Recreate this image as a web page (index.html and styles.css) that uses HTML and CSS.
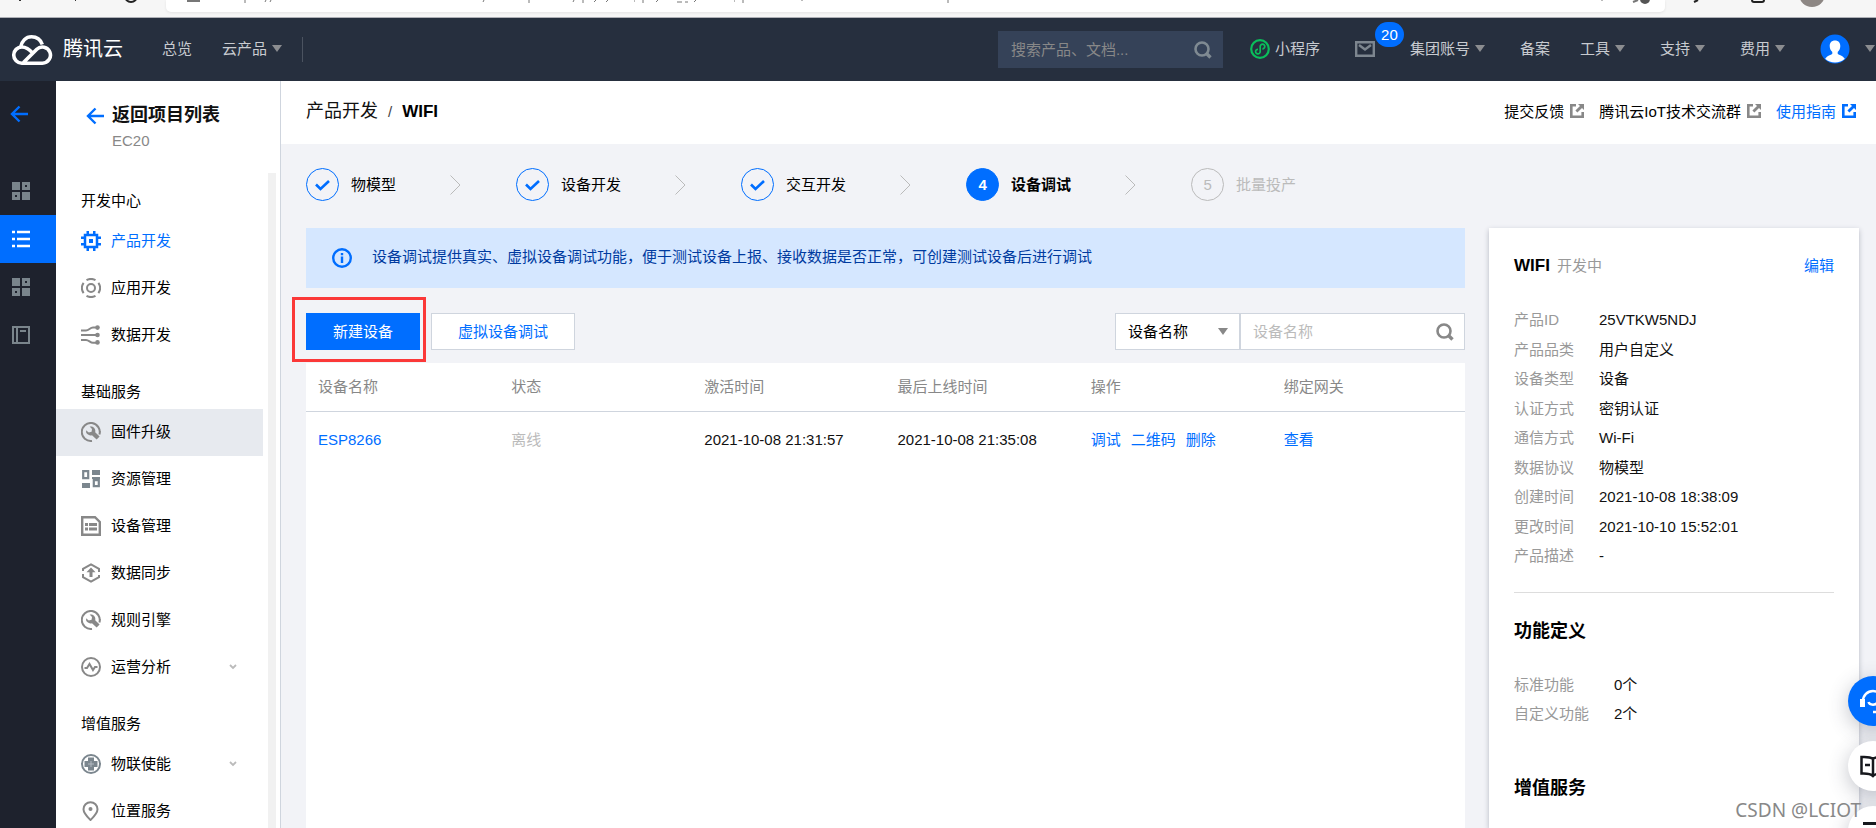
FILE: index.html
```
<!DOCTYPE html>
<html lang="zh-CN">
<head>
<meta charset="utf-8">
<title>设备调试 - 产品开发 - 腾讯云</title>
<link rel="stylesheet" href="styles.css">
</head>
<body>
<svg class="sprite" aria-hidden="true">
  <symbol id="caret" viewBox="0 0 10 7"><path d="M0 0h10L5 7z" fill="currentColor"/></symbol>
  <symbol id="arrow-left" viewBox="0 0 18 18"><path d="M18 9H2M9.500 1.500 2 9l7.500 7.500" fill="none" stroke="currentColor" stroke-width="2.400"/></symbol>
  <symbol id="search" viewBox="0 0 18 18"><circle cx="8" cy="8" r="6.500" fill="none" stroke="currentColor" stroke-width="2.600"/><path d="m12 12 4.500 4.500" stroke="currentColor" stroke-width="3.400"/></symbol>
  <symbol id="blocks" viewBox="0 0 18 18"><path d="M0 0h8v8H0zM10 10h8v8h-8z" fill="currentColor"/><path d="M11.500 1.500h5v5h-5zM1.500 11.500h5v5h-5z" fill="none" stroke="currentColor" stroke-width="3"/></symbol>
  <symbol id="external" viewBox="0 0 14 14"><path d="M6 1.300H1.300v11.400h11.400V8" fill="none" stroke="currentColor" stroke-width="2.600"/><path d="M8 0h6v6l-2-2-4.600 4.600-2-2L10 2z" fill="currentColor"/></symbol>
  <symbol id="check" viewBox="0 0 33 33"><path d="m10 16.500 4.500 4.500 8.500-8" fill="none" stroke="currentColor" stroke-width="2.600"/></symbol>
  <symbol id="chevron-right" viewBox="0 0 11 20"><path d="m.5.5 9.500 9.500-9.500 9.500" fill="none" stroke="currentColor"/></symbol>
  <symbol id="chevron-down" viewBox="0 0 8 6"><path d="m1 1 3 3 3-3" fill="none" stroke="currentColor" stroke-width="1.800"/></symbol>
  <symbol id="wrench" viewBox="0 0 20 20"><path d="M18.400 12.500A9 9 0 1 0 11 18.900M18.900 9a9 9 0 0 1-.5 3.500" fill="none" stroke="currentColor" stroke-width="2"/><path d="M8.600 4.600a4.600 4.600 0 0 1 5.600 5.600l4.400 4.200-3 3.200-4.600-4.400a4.600 4.600 0 0 1-6-5l2.800 2.400 2.800-.8.400-2.800z" fill="currentColor"/></symbol>
</svg>

<div class="browser" aria-hidden="true">
  <svg class="browser-left" viewBox="0 0 166 17"><path d="M19 0h2v1h-2zM75 0h1v1h-1z" fill="#333"/><circle cx="131" cy="-4" r="6" fill="none" stroke="#222" stroke-width="2"/></svg>
  <div class="browser-field">
    <svg width="1499" height="12" viewBox="166 0 1499 12"><path d="M187 0h13v2h-13z" fill="#777"/><path d="M245 0v3M265 2l1-2M270 2l1-2M483 2l1-2M529 0v3M573 2l1-2M583 0v3M594 2l2-2M606 2l2-2M634 1h1M643 0v3M656 2l2-2M677 2h5M685 2h3M694 2l2-2M734 1h1M743 0v3M802 0v1M948 0v3M1602 0v1" fill="none" stroke="#777"/><circle cx="1645" cy="-1" r="5" fill="#555"/><path d="m1633 2 5-2" stroke="#777" stroke-width="2"/></svg>
  </div>
  <svg class="browser-right" viewBox="1665 0 211 17"><path d="m1694 2 4-2" stroke="#222" stroke-width="2"/><rect x="1752" y="-8" width="12" height="10" rx="2" fill="none" stroke="#222" stroke-width="2"/><circle cx="1812" cy="-6" r="13" fill="#8d8784"/></svg>
</div>

<header class="topbar">
  <a class="brand" href="#">
    <svg width="42" height="30" viewBox="0 0 42 30" fill="none" stroke="#fff" stroke-width="3.600"><path d="M9.500 12.500C10.500 6 15 1.800 20.500 1.800c4.800 0 9 2.700 10.800 7.700"/><path d="M22 18.500c-2.800-3.300-6.800-6.500-11.200-6.500a8.100 8.100 0 0 0 0 16.200h20.600a8.100 8.100 0 1 0-5.600-14L12.500 27.500"/></svg>
    <span>腾讯云</span>
  </a>
  <nav class="topnav topnav-main">
    <a href="#">总览</a>
    <a href="#" class="has-caret">云产品<svg class="caret"><use href="#caret"/></svg></a>
  </nav>
  <form class="top-search">
    <input type="text" placeholder="搜索产品、文档..." aria-label="搜索产品、文档">
    <button type="button" aria-label="搜索"><svg class="icon18"><use href="#search"/></svg></button>
  </form>
  <nav class="topnav topnav-user">
    <a href="#" class="mini"><svg width="20" height="20" viewBox="0 0 20 20" fill="none" stroke="#0abf5b"><circle cx="10" cy="10" r="8.800" stroke-width="2.200"/><path d="M8 10.300a2.300 2.300 0 1 0 2.200 2.300V7.500A2.300 2.300 0 1 1 12.400 9.800" stroke-width="1.700"/></svg>小程序</a>
    <a href="#" class="mail" aria-label="消息"><svg width="20" height="16" viewBox="0 0 20 16" fill="none" stroke="#7d868f" stroke-width="2.400"><path d="M1.200 1.200h17.600v13.600H1.200z"/><path d="m4 4 6 4.500L16 4"/></svg><span class="badge">20</span></a>
    <a href="#" class="has-caret">集团账号<svg class="caret"><use href="#caret"/></svg></a>
    <a href="#">备案</a>
    <a href="#" class="has-caret">工具<svg class="caret"><use href="#caret"/></svg></a>
    <a href="#" class="has-caret">支持<svg class="caret"><use href="#caret"/></svg></a>
    <a href="#" class="has-caret">费用<svg class="caret"><use href="#caret"/></svg></a>
    <a href="#" class="account" aria-label="账号"><svg width="30" height="30" viewBox="0 0 30 30"><circle cx="15" cy="15" r="14.500" fill="#006eff"/><path d="M15 6.500c3.300 0 5.300 2.200 5.300 5.400 0 2.600-1 4.600-2.600 6v1.800c1.200 1.300 5 1.800 7.100 5a14.500 14.500 0 0 1-19.600 0c2.100-3.200 5.900-3.700 7.100-5v-1.800c-1.600-1.400-2.600-3.400-2.600-6 0-3.200 2-5.400 5.300-5.400z" fill="#fff"/></svg><svg class="caret"><use href="#caret"/></svg></a>
  </nav>
</header>

<div class="workspace">
  <nav class="rail" aria-label="快捷导航">
    <a href="#" class="rail-back" aria-label="返回"><svg class="icon18"><use href="#arrow-left"/></svg></a>
    <a href="#" aria-label="概览"><svg class="icon18"><use href="#blocks"/></svg></a>
    <a href="#" class="active" aria-label="项目列表"><svg class="icon18" viewBox="0 0 18 18"><path d="M0 2h3M5 2h13M0 9h3M5 9h13M0 16h3M5 16h13" stroke="currentColor" stroke-width="2.500"/></svg></a>
    <a href="#" aria-label="应用"><svg class="icon18"><use href="#blocks"/></svg></a>
    <a href="#" aria-label="文档"><svg class="icon18" viewBox="0 0 18 18"><path d="M1 1h16v16H1zM5 1v16M8 5h6" fill="none" stroke="currentColor" stroke-width="2"/></svg></a>
  </nav>

  <aside class="sidebar">
    <div class="side-head">
      <a href="#" class="side-back"><svg class="icon18"><use href="#arrow-left"/></svg>返回项目列表</a>
      <p>EC20</p>
    </div>
    <div class="side-scroll">
      <nav class="side-list">
        <h2>开发中心</h2>
        <a href="#" class="current"><svg class="icon20" viewBox="0 0 20 20"><path d="M4 4h12v12H4z" fill="none" stroke="currentColor" stroke-width="2.500"/><path d="M8 8h4v4H8zM5.500 0H8v4H5.500zM12 0h2.500v4H12zM5.500 16H8v4H5.500zM12 16h2.500v4H12zM0 5.500h4V8H0zM0 12h4v2.500H0zM16 5.500h4V8h-4zM16 12h4v2.500h-4z" fill="currentColor"/></svg>产品开发</a>
        <a href="#"><svg class="icon20" viewBox="0 0 20 20" fill="none" stroke="currentColor" stroke-width="2"><circle cx="10" cy="10" r="4"/><path d="M5.500 2.200a9 9 0 0 1 9 0M5.500 17.800a9 9 0 0 0 9 0M2.600 4.900a9 9 0 0 0 0 10.200M17.400 4.900a9 9 0 0 1 0 10.200"/></svg>应用开发</a>
        <a href="#"><svg class="icon20" viewBox="0 0 20 20" fill="none" stroke="currentColor" stroke-width="2"><path d="M0 5.500h5c3 0 4-3 7-3h5M0 10h17M0 15h5c3 0 4 2.700 7 2.700h5"/><g fill="currentColor" stroke="none"><circle cx="16.500" cy="2.600" r="2.300"/><circle cx="16.500" cy="10" r="2.300"/><circle cx="16.500" cy="17.400" r="2.300"/></g></svg>数据开发</a>
        <h2>基础服务</h2>
        <a href="#" class="hover"><svg class="icon20"><use href="#wrench"/></svg>固件升级</a>
        <a href="#"><svg class="icon20 slate" viewBox="0 0 20 20"><path d="M2.200 2.200h5v7h-5zM12.800 11.200h5v6h-5z" fill="none" stroke="currentColor" stroke-width="2.200"/><path d="M11 1h8v5h-8zM1 14h8v5H1zM11 8h8v2h-8z" fill="currentColor"/></svg>资源管理</a>
        <a href="#"><svg class="icon20" viewBox="0 0 20 20"><path d="M1.200 1.200H14L18.800 6v12.800H1.200z" fill="none" stroke="currentColor" stroke-width="2.400"/><path d="M4 7h3v3H4zM8 7h8v3H8zM4 11.500h3v3H4zM8 11.500h8v3H8z" fill="currentColor"/></svg>设备管理</a>
        <a href="#"><svg class="icon20" viewBox="0 0 20 20"><path d="M2 8V5.800L10 1.300l8 4.500V9M2 11v3.200l8 4.500 8-4.500V12" fill="none" stroke="currentColor" stroke-width="2"/><path d="m10 4.500 4.500 4.700h-3V14h-3V9.200h-3z" fill="currentColor"/></svg>数据同步</a>
        <a href="#"><svg class="icon20"><use href="#wrench"/></svg>规则引擎</a>
        <a href="#"><svg class="icon20" viewBox="0 0 20 20" fill="none" stroke="currentColor" stroke-width="2"><circle cx="10" cy="10" r="9"/><path d="M3.500 11H6l2.500-4 3.500 6 2-3h2.500"/></svg>运营分析<svg class="fold"><use href="#chevron-down"/></svg></a>
        <h2>增值服务</h2>
        <a href="#"><svg class="icon20 slate" viewBox="0 0 20 20"><circle cx="10" cy="10" r="9" fill="none" stroke="currentColor" stroke-width="2"/><path d="M7 3.500h6V7h3.500v6H13v3.500H7V13H3.500V7H7z" fill="currentColor"/><path d="M10 7v6M7 10h6" stroke="#b4bac2"/></svg>物联使能<svg class="fold"><use href="#chevron-down"/></svg></a>
        <a href="#"><svg class="icon20" viewBox="0 0 20 20"><path d="M9.500 1.200a7 7 0 0 1 7 7c0 4-4 7.800-7 10.800-3-3-7-6.800-7-10.800a7 7 0 0 1 7-7z" fill="none" stroke="currentColor" stroke-width="2"/><circle cx="9.500" cy="8" r="2" fill="currentColor"/></svg>位置服务</a>
      </nav>
      <div class="side-track"></div>
    </div>
  </aside>

  <main class="main">
    <div class="page-head">
      <h1><a href="#">产品开发</a><span class="slash">/</span><b>WIFI</b></h1>
      <div class="page-links">
        <a href="#">提交反馈<svg class="icon14"><use href="#external"/></svg></a>
        <a href="#">腾讯云IoT技术交流群<svg class="icon14"><use href="#external"/></svg></a>
        <a href="#" class="primary">使用指南<svg class="icon14"><use href="#external"/></svg></a>
      </div>
    </div>

    <div class="content">
      <ol class="steps">
        <li class="done"><span class="dot"><svg><use href="#check"/></svg></span>物模型<svg class="sep"><use href="#chevron-right"/></svg></li>
        <li class="done"><span class="dot"><svg><use href="#check"/></svg></span>设备开发<svg class="sep"><use href="#chevron-right"/></svg></li>
        <li class="done"><span class="dot"><svg><use href="#check"/></svg></span>交互开发<svg class="sep"><use href="#chevron-right"/></svg></li>
        <li class="now"><span class="dot">4</span>设备调试<svg class="sep"><use href="#chevron-right"/></svg></li>
        <li class="todo"><span class="dot">5</span>批量投产</li>
      </ol>

      <div class="columns">
        <section class="devices">
          <div class="alert" role="note">
            <svg class="icon20" viewBox="0 0 20 20"><circle cx="10" cy="10" r="8.800" fill="none" stroke="currentColor" stroke-width="2.400"/><path d="M8.800 5h2.400v2.300H8.800zM8.800 8.500h2.400V15H8.800z" fill="currentColor"/></svg>
            <p>设备调试提供真实、虚拟设备调试功能，便于测试设备上报、接收数据是否正常，可创建测试设备后进行调试</p>
          </div>

          <div class="toolbar">
            <div class="marked">
              <button type="button" class="btn btn-primary">新建设备</button>
              <span class="mark"></span>
            </div>
            <button type="button" class="btn">虚拟设备调试</button>
            <form class="filter">
              <div class="select-wrap">
                <select aria-label="搜索字段"><option>设备名称</option></select>
                <svg class="caret"><use href="#caret"/></svg>
              </div>
              <div class="input-wrap">
                <input type="text" placeholder="设备名称" aria-label="设备名称">
                <button type="button" aria-label="搜索"><svg class="icon18"><use href="#search"/></svg></button>
              </div>
            </form>
          </div>

          <div class="table-card">
            <table>
              <thead>
                <tr><th>设备名称</th><th>状态</th><th>激活时间</th><th>最后上线时间</th><th>操作</th><th>绑定网关</th></tr>
              </thead>
              <tbody>
                <tr>
                  <td><a href="#">ESP8266</a></td>
                  <td class="offline">离线</td>
                  <td>2021-10-08 21:31:57</td>
                  <td>2021-10-08 21:35:08</td>
                  <td><div class="ops"><a href="#">调试</a><a href="#">二维码</a><a href="#">删除</a></div></td>
                  <td><a href="#">查看</a></td>
                </tr>
              </tbody>
            </table>
          </div>
        </section>

        <aside class="info">
          <div class="info-head"><h2>WIFI</h2><span>开发中</span><a href="#">编辑</a></div>
          <dl class="props basic">
            <dt>产品ID</dt><dd>25VTKW5NDJ</dd>
            <dt>产品品类</dt><dd>用户自定义</dd>
            <dt>设备类型</dt><dd>设备</dd>
            <dt>认证方式</dt><dd>密钥认证</dd>
            <dt>通信方式</dt><dd>Wi-Fi</dd>
            <dt>数据协议</dt><dd>物模型</dd>
            <dt>创建时间</dt><dd>2021-10-08 18:38:09</dd>
            <dt>更改时间</dt><dd>2021-10-10 15:52:01</dd>
            <dt>产品描述</dt><dd>-</dd>
          </dl>
          <h3>功能定义</h3>
          <dl class="props">
            <dt>标准功能</dt><dd>0个</dd>
            <dt>自定义功能</dt><dd>2个</dd>
          </dl>
          <h3>增值服务</h3>
        </aside>
      </div>
    </div>
  </main>
</div>

<div class="floats">
  <button type="button" class="float-blue" aria-label="在线客服"><svg viewBox="0 0 26 26" fill="none" stroke="currentColor" stroke-width="2.500"><path d="M3 18v-5a10 10 0 0 1 20 0v5"/><path d="M0 11h5v8H0zM21 11h5v8h-5z" fill="currentColor" stroke="none"/><path d="M8.500 14c1 3.500 8 3.500 9 0M13 24h5c3 0 5-2 5-5"/></svg></button>
  <button type="button" aria-label="文档"><svg viewBox="0 0 26 26" fill="none" stroke="currentColor" stroke-width="2.500"><path d="M13 6C10 3.500 6 4 1.500 4v16.500c4 0 8.500-.5 11.500 2.500 3-3 7.500-2.500 11.500-2.500V4C20 4 16 3.500 13 6zm0 0v17M5 12h5"/></svg></button>
  <button type="button" aria-label="菜单"><svg viewBox="0 0 26 26" fill="none" stroke="currentColor" stroke-width="3"><path d="M3 5.500h20M3 13h20M3 21h20"/></svg></button>
</div>
<div class="watermark">CSDN @LCIOT</div>
</body>
</html>
```

FILE: styles.css
```
* { box-sizing: border-box; }

body {
  margin: 0;
  height: 100vh;
  display: flex;
  flex-direction: column;
  overflow: hidden;
  position: relative;
  font: 15px/21px "Liberation Sans", "Noto Sans CJK SC", sans-serif;
  color: #000;
  background: #f2f3f7;
}

h1, h2, h3, p, ol, dl, dd { margin: 0; padding: 0; }
a { color: #006eff; text-decoration: none; }
button, input, select { font: inherit; color: inherit; margin: 0; border: 0; border-radius: 0; outline: 0; }
button { padding: 0; background: none; cursor: pointer; }
svg { display: block; flex: none; }

.sprite { position: absolute; width: 0; height: 0; }
.caret { width: 10px; height: 7px; }
.icon14 { width: 14px; height: 14px; }
.icon18 { width: 18px; height: 18px; }
.icon20 { width: 20px; height: 20px; }

/* Browser strip */
.browser {
  flex: none;
  display: flex;
  height: 18px;
  background: #f6f6f6;
  border-bottom: 1px solid #aeb0b6;
}
.browser-left { width: 166px; height: 17px; }
.browser-right { width: 211px; height: 17px; }
.browser-field {
  flex: 1;
  height: 12px;
  overflow: hidden;
  background: #fff;
  border-radius: 0 0 5px 5px;
  box-shadow: 0 1px 3px rgba(0, 0, 0, .08);
}

/* Top bar */
.topbar {
  flex: none;
  display: flex;
  align-items: center;
  height: 63px;
  padding: 0 1px 0 11px;
  background: #262f3e;
  color: #c8cbd0;
}
.brand {
  display: flex;
  align-items: center;
  gap: 10px;
  color: #fff;
  font-size: 20px;
}
.topnav { display: flex; align-items: center; gap: 30px; }
.topnav a { display: flex; align-items: center; padding-bottom: 2px; color: inherit; white-space: nowrap; }
.topnav .caret { color: #8b8d90; }
.topnav .has-caret { gap: 5px; padding-right: 5px; }
.topnav-main {
  margin: 0 auto 0 39px;
  padding-right: 15px;
  height: 25px;
  border-right: 1px solid #4b5360;
}
.top-search {
  display: flex;
  align-items: center;
  width: 225px;
  height: 37px;
  margin-right: 27px;
  padding: 0 11px 0 13px;
  background: #354258;
}
.top-search input { flex: 1; min-width: 0; padding: 0; background: none; }
.top-search input::placeholder { color: #888; opacity: 1; }
.top-search button { color: #7f8a92; }
.topnav .mini { gap: 5px; }
.topnav .mail { position: relative; padding: 0 5px 2px; }
.badge {
  position: absolute;
  left: 25px;
  bottom: 12px;
  min-width: 29px;
  height: 25px;
  border-radius: 13px;
  background: #006eff;
  color: #fff;
  line-height: 25px;
  text-align: center;
}
.topnav .account { gap: 15px; }

/* Layout */
.workspace { flex: 1; min-height: 0; display: flex; }

.rail {
  flex: none;
  width: 56px;
  background: #1e222d;
  color: #7a858c;
}
.rail a {
  display: flex;
  align-items: center;
  height: 48px;
  padding-left: 12px;
  color: inherit;
}
.rail a.rail-back { height: 66px; margin-bottom: 20px; padding-left: 10px; color: #006eff; }
.rail a.active { background: #006eff; color: #fff; }

.sidebar {
  flex: none;
  width: 225px;
  display: flex;
  flex-direction: column;
  background: #fff;
  border-right: 1px solid #cfd5de;
}
.side-head { flex: none; height: 92px; padding: 24px 30px 0; }
.side-back {
  display: flex;
  align-items: center;
  gap: 8px;
  color: #111;
  font-size: 18px;
  font-weight: bold;
  white-space: nowrap;
}
.side-back svg { color: #006eff; }
.side-head p { margin-top: 4px; padding-left: 26px; color: #888; }
.side-scroll { flex: 1; min-height: 0; display: flex; gap: 5px; padding-right: 4px; }
.side-list { flex: 1; overflow: hidden; }
.side-track { width: 8px; background: #f1f1f1; }
.side-list h2 { padding: 22px 25px 7px; font-size: 15px; font-weight: normal; }
.side-list h2:first-child { padding-top: 17px; }
.side-list a {
  display: flex;
  align-items: center;
  gap: 10px;
  height: 47px;
  padding: 0 26px 2px 25px;
  color: #000;
}
.side-list a svg { color: #888; }
.side-list a .slate { color: #7b868e; }
.side-list a.current, .side-list a.current svg { color: #006eff; }
.side-list a.hover { background: #e7eaef; }
.side-list .fold { width: 8px; height: 6px; margin-left: auto; color: #bbb; }

.main { flex: 1; min-width: 0; display: flex; flex-direction: column; }
.page-head {
  flex: none;
  display: flex;
  align-items: center;
  justify-content: space-between;
  height: 63px;
  padding: 0 20px 3px 25px;
  background: #fff;
}
.page-head h1 { display: flex; gap: 10px; font-size: 18px; font-weight: normal; }
.page-head h1 a { color: #111; }
.page-head h1 b { font-size: 17px; }
.slash { font-size: 15px; color: #444; }
.page-links { display: flex; gap: 15px; }
.page-links a { display: flex; align-items: center; gap: 6px; color: #000; }
.page-links svg { color: #888; }
.page-links a.primary, .page-links .primary svg { color: #006eff; }

.content { flex: 1; min-height: 0; display: flex; flex-direction: column; padding: 24px 17px 0 25px; }
.steps { display: flex; gap: 55px; margin-bottom: 27px; list-style: none; }
.steps li { display: flex; align-items: center; gap: 12px; white-space: nowrap; }
.steps .sep { width: 11px; height: 20px; margin-left: 42px; color: #bbb; }
.dot {
  display: flex;
  align-items: center;
  justify-content: center;
  width: 33px;
  height: 33px;
  border: 1px solid #006eff;
  border-radius: 50%;
  color: #006eff;
}
.dot svg { width: 33px; height: 33px; }
.now { font-weight: bold; }
.now .dot { background: #006eff; color: #fff; }
.todo { color: #bbb; }
.todo .dot { border-color: #bbb; color: #bbb; }

.columns { flex: 1; min-height: 0; display: flex; gap: 24px; }
.devices { flex: 1; min-width: 0; display: flex; flex-direction: column; }

.alert {
  display: flex;
  gap: 20px;
  padding: 20px 26px;
  background: #d5e7ff;
  color: #003b9f;
}
.alert .icon20 { color: #006eff; }
.alert p { line-height: 18px; }

.toolbar { display: flex; gap: 11px; margin: 25px 0 13px; }
.btn {
  height: 37px;
  padding: 0 26px;
  border: 1px solid #cfd5de;
  background: #fff;
  color: #006eff;
}
.btn-primary { border-color: #006eff; background: #006eff; color: #fff; }
.marked { position: relative; }
.mark {
  position: absolute;
  inset: -16px -6px -12px -14px;
  border: 3px solid #fb3838;
  pointer-events: none;
}
.filter { display: flex; margin-left: auto; }
.select-wrap, .input-wrap {
  display: flex;
  align-items: center;
  height: 37px;
  border: 1px solid #cfd5de;
  background: #fff;
}
.select-wrap { width: 125px; position: relative; }
.select-wrap select { width: 100%; height: 100%; padding: 0 12px; appearance: none; background: none; }
.select-wrap .caret { position: absolute; right: 11px; color: #888; pointer-events: none; }
.input-wrap { width: 225px; padding: 0 10px 0 12px; }
.input-wrap input { flex: 1; min-width: 0; padding: 0; background: none; }
.input-wrap input::placeholder { color: #bbb; opacity: 1; }
.input-wrap button { color: #888; }

.table-card { flex: 1; background: #fff; }
table { width: 100%; table-layout: fixed; border-collapse: collapse; }
th, td { padding: 0 0 0 12px; text-align: left; font-weight: normal; white-space: nowrap; }
th { height: 48px; border-bottom: 1px solid #cfd5de; color: #888; }
td { height: 57px; color: #111; }
td.offline { color: #bbb; }
.ops { display: flex; gap: 10px; }

.info {
  flex: none;
  width: 370px;
  padding: 27px 25px 0;
  background: #fff;
  box-shadow: 0 2px 5px rgba(54, 58, 80, .32);
}
.info-head { display: flex; align-items: center; gap: 7px; margin-bottom: 33px; }
.info-head h2 { font-size: 17px; }
.info-head span { color: #999; }
.info-head a { margin-left: auto; }
.props {
  display: grid;
  grid-template-columns: auto 1fr;
  column-gap: 25px;
  row-gap: 8px;
}
.props dt { color: #999; }
.props dd { color: #111; }
.props.basic {
  min-height: 284px;
  align-content: space-between;
  padding-bottom: 26px;
  border-bottom: 1px solid #ddd;
}
.props + h3 { margin-top: 54px; }
.props.basic + h3 { margin-top: 28px; }
.info h3 { margin-bottom: 32px; font-size: 18px; }

/* Floating tools */
.floats {
  position: absolute;
  right: -22px;
  bottom: -28px;
  display: flex;
  flex-direction: column;
  gap: 15px;
}
.floats button {
  display: flex;
  align-items: center;
  justify-content: center;
  width: 50px;
  height: 50px;
  border-radius: 50%;
  background: #fff;
  color: #16181d;
  box-shadow: 0 5px 20px rgba(54, 58, 80, .3);
}
.floats svg { width: 26px; height: 26px; }
.floats .float-blue { background: #006eff; color: #fff; }

.watermark {
  position: absolute;
  right: 15px;
  bottom: 6px;
  font: 19px/24px "Noto Sans", sans-serif;
  color: #888;
}
```
